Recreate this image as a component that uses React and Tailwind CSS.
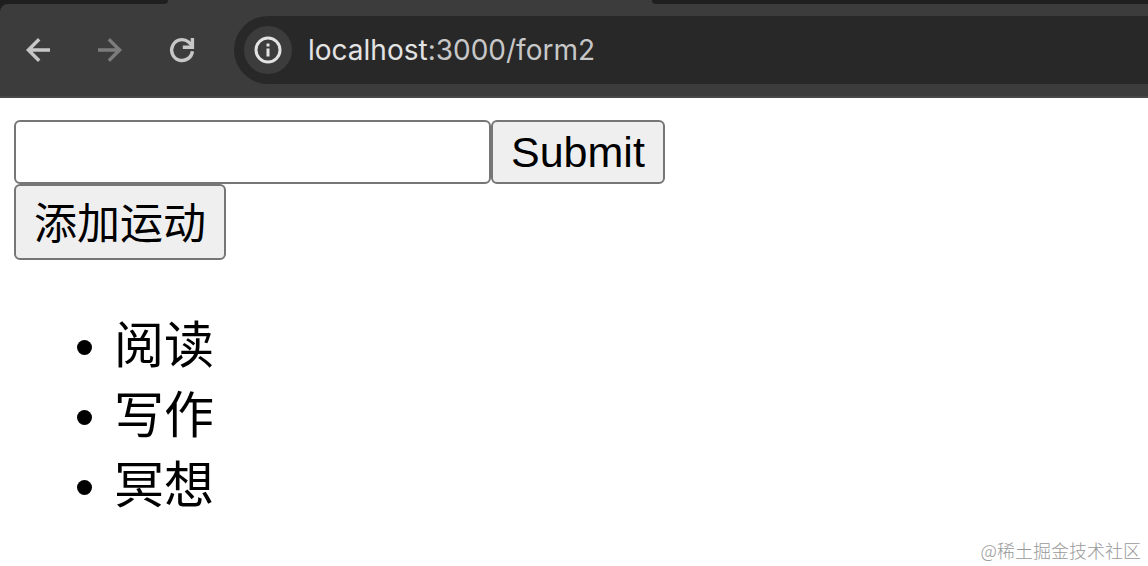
function Arrow({ className }) {
  return (
    <svg viewBox="0 0 36 36" className={className} fill="none" stroke="currentColor" strokeWidth="3.4" aria-hidden="true">
      <path d="M30 18H8.5M19.2 7.2L8.4 18l10.8 10.8" />
    </svg>
  );
}

function Reload() {
  return (
    <svg viewBox="0 0 36 36" className="size-9" fill="none" stroke="currentColor" strokeWidth="3.4" aria-hidden="true">
      <path d="M28.4 19.2A10.4 10.4 0 1 1 24.6 10L28 13.4" />
      <path d="M28.4 6v9.2H18.8" />
    </svg>
  );
}

function Info() {
  return (
    <svg viewBox="0 0 28 28" className="size-7" fill="none" stroke="currentColor" strokeWidth="3" aria-hidden="true">
      <circle cx="14" cy="14" r="12" />
      <path d="M14 12.5v8M14 7.5v3" />
    </svg>
  );
}

const sports = ['阅读', '写作', '冥想'];

export default function App() {
  return (
    <div className="flex min-h-screen flex-col bg-white font-['Liberation_Sans','Noto_Sans_CJK_SC',sans-serif] text-black">
      <header className="bg-[#1f1f1f]">
        <div className="flex h-1 bg-[#3c3c3c]">
          <div className="w-[168px] rounded-br-[8px] bg-[#1f1f1f]" />
          <div className="ml-[484px] flex-1 rounded-bl-[8px] bg-[#1f1f1f]" />
        </div>
        <div className="flex items-center rounded-tl-[8px] border-b-2 border-[#474747] bg-[#3c3c3c] pt-3 pb-3 pl-5">
          <button type="button" aria-label="Back" className="text-[#c7c7c7]">
            <Arrow className="size-9" />
          </button>
          <button type="button" aria-label="Forward" className="ml-9 text-[#7c7c7c]">
            <Arrow className="size-9 rotate-180" />
          </button>
          <button type="button" aria-label="Reload" className="ml-9 text-[#c7c7c7]">
            <Reload />
          </button>
          <div className="ml-[34px] flex h-[68px] flex-1 items-center rounded-l-full bg-[#282828] pl-[10px]">
            <button type="button" aria-label="Site information" className="flex size-12 items-center justify-center rounded-full bg-[#3c3c3c] text-[#e3e3e3]">
              <Info />
            </button>
            <p className="ml-4 font-['Inter',sans-serif] text-[28px] leading-8 text-[#c7c7c7]">
              <span className="text-[#e3e3e3]">localhost</span>:3000/form2
            </p>
          </div>
        </div>
      </header>

      <main className="flex-1 px-[14px] pt-[22px]">
        <form className="flex" onSubmit={(e) => e.preventDefault()}>
          <input type="text" aria-label="运动" className="h-16 w-[477px] rounded-[6px] border-2 border-[#767676] bg-white px-1 text-[43px] outline-none" />
          <button type="submit" className="h-16 rounded-[6px] border-2 border-[#767676] bg-[#efefef] px-[18px] text-[43px] leading-[56px]">
            Submit
          </button>
        </form>
        <button type="button" className="flex h-[76px] items-center rounded-[6px] border-2 border-[#767676] bg-[#efefef] px-[18px] pt-1 text-[43px] leading-none">
          添加运动
        </button>
        <ul className="mt-[51px] list-disc pl-[100px] text-[50px] leading-[70px]">
          {sports.map((s) => (
            <li key={s}>{s}</li>
          ))}
        </ul>
      </main>

      <footer className="pr-[7px] pb-1 text-right font-['Noto_Sans_CJK_SC',sans-serif] text-[18px] leading-6 font-light text-[#999999]">
        @稀土掘金技术社区
      </footer>
    </div>
  );
}
